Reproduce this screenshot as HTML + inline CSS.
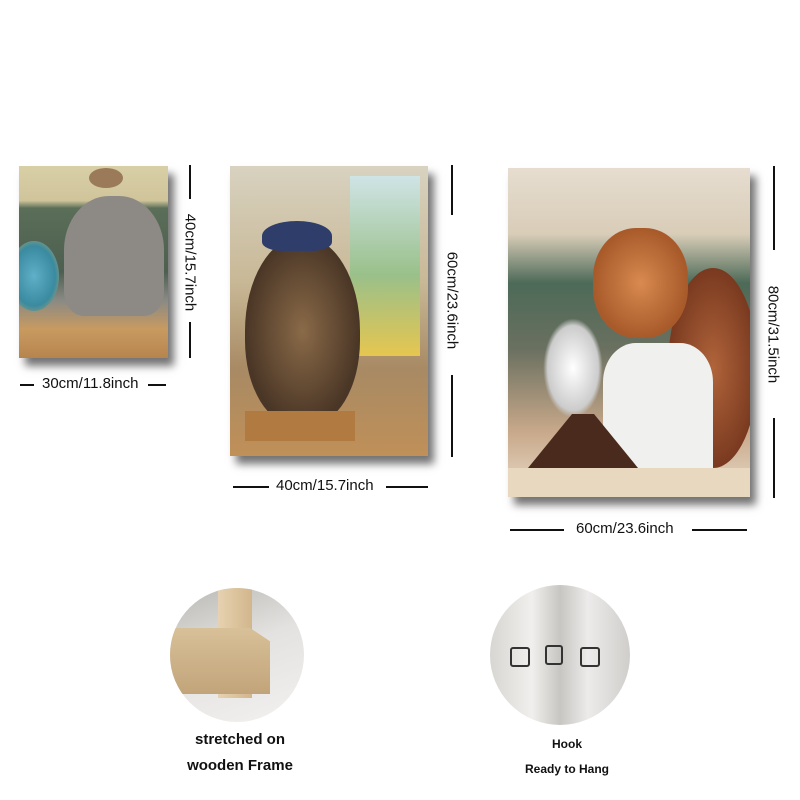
<!DOCTYPE html>
<html><head><style>
body{margin:0;width:800px;height:800px;background:#fff;position:relative;overflow:hidden;font-family:"Liberation Sans",sans-serif;}
.a{position:absolute}
.p{position:absolute;box-shadow:6px 8px 8px rgba(0,0,0,.55)}
.t{position:absolute;font-size:15px;color:#111;white-space:nowrap}
.hl{position:absolute;height:2px;background:#111}
.vl{position:absolute;width:2px;background:#111}
.r{position:absolute;font-size:15px;color:#111;white-space:nowrap;transform:rotate(90deg);transform-origin:center}
.c{position:absolute;border-radius:50%;overflow:hidden}
.b{position:absolute;font-weight:bold;color:#111;text-align:center;white-space:nowrap}
</style></head><body>

<div class="p" style="left:19px;top:166px;width:149px;height:192px;background:linear-gradient(180deg,#d9cfa6 0%,#cfc49a 18%,#5a6e58 22%,#4d5f50 55%,#8a8a84 70%,#c89a60 85%,#b6854e 100%);overflow:hidden">
 <div class="a" style="left:45px;top:30px;width:100px;height:120px;background:#8d8a86;border-radius:45% 45% 20% 20%"></div>
 <div class="a" style="left:-10px;top:75px;width:50px;height:70px;background:radial-gradient(#5fb0c8,#3a8aa0 60%,#d0b060);border-radius:50%"></div>
 <div class="a" style="left:70px;top:2px;width:34px;height:20px;border-radius:50%;background:#9a7a58"></div>
</div>
<div class="vl" style="left:189px;top:165px;height:34px"></div>
<div class="vl" style="left:189px;top:322px;height:36px"></div>
<div class="r" style="left:140px;top:254px;width:100px;text-align:center">40cm/15.7inch</div>
<div class="hl" style="left:20px;top:384px;width:14px"></div>
<div class="t" style="left:42px;top:375px">30cm/11.8inch</div>
<div class="hl" style="left:148px;top:384px;width:18px"></div>

<div class="p" style="left:230px;top:166px;width:198px;height:290px;background:linear-gradient(180deg,#d8d2c0 0%,#c8b896 40%,#a88a64 70%,#c09058 100%);overflow:hidden">
 <div class="a" style="left:120px;top:10px;width:70px;height:180px;background:linear-gradient(180deg,#cfe4e6,#9ac08a 55%,#e6c650)"></div>
 <div class="a" style="left:15px;top:70px;width:115px;height:190px;background:radial-gradient(#8a6a48,#4a3626 70%);border-radius:50% 50% 45% 45%"></div>
 <div class="a" style="left:32px;top:55px;width:70px;height:30px;background:#2f3d6a;border-radius:50% 50% 30% 30%"></div>
 <div class="a" style="left:15px;top:245px;width:110px;height:30px;background:#b07a40"></div>
</div>
<div class="vl" style="left:451px;top:165px;height:50px"></div>
<div class="vl" style="left:451px;top:375px;height:82px"></div>
<div class="r" style="left:402px;top:292px;width:100px;text-align:center">60cm/23.6inch</div>
<div class="hl" style="left:233px;top:486px;width:36px"></div>
<div class="t" style="left:276px;top:477px">40cm/15.7inch</div>
<div class="hl" style="left:386px;top:486px;width:42px"></div>

<div class="p" style="left:508px;top:168px;width:242px;height:329px;background:linear-gradient(180deg,#e6ddd0 0%,#d9cdb8 20%,#4d6a58 35%,#6a7060 55%,#c8a88a 80%,#e8dcc8 100%);overflow:hidden">
 <div class="a" style="left:160px;top:100px;width:90px;height:200px;background:radial-gradient(#b0643a,#7a3a20 70%);border-radius:50%"></div>
 <div class="a" style="left:85px;top:60px;width:95px;height:110px;background:radial-gradient(#d88a50,#a85a2a 70%);border-radius:45%"></div>
 <div class="a" style="left:95px;top:175px;width:110px;height:130px;background:#f0f0ee;border-radius:30% 30% 0 0"></div>
 <div class="a" style="left:35px;top:150px;width:60px;height:100px;background:radial-gradient(#ffffff,#ccc 60%,transparent 70%)"></div>
 <div class="a" style="left:20px;top:240px;width:110px;height:60px;background:#4a2a1c;clip-path:polygon(0 100%,40% 10%,60% 10%,100% 100%)"></div>
 <div class="a" style="left:0;top:300px;width:242px;height:29px;background:#e8d8c0"></div>
</div>
<div class="vl" style="left:773px;top:166px;height:84px"></div>
<div class="vl" style="left:773px;top:418px;height:80px"></div>
<div class="r" style="left:723px;top:326px;width:100px;text-align:center">80cm/31.5inch</div>
<div class="hl" style="left:510px;top:529px;width:54px"></div>
<div class="t" style="left:576px;top:520px">60cm/23.6inch</div>
<div class="hl" style="left:692px;top:529px;width:55px"></div>

<div class="c" style="left:170px;top:588px;width:134px;height:134px;background:linear-gradient(160deg,#b8b8b4 0%,#e4e2e0 45%,#f2f1ef 100%)">
 <div class="a" style="left:48px;top:0;width:34px;height:110px;background:linear-gradient(90deg,#e6d2b0,#d2b68c)"></div>
 <div class="a" style="left:0;top:40px;width:100px;height:66px;background:linear-gradient(180deg,#d8c098,#c2a47a);clip-path:polygon(0 0,80% 0,100% 20%,100% 100%,0 100%)"></div>
</div>
<div class="c" style="left:490px;top:585px;width:140px;height:140px;background:linear-gradient(90deg,#d8d6d2,#f0efed 30%,#c8c6c2 50%,#ecebea 70%,#d0cecb)">
 <div class="a" style="left:20px;top:62px;width:16px;height:16px;border:2px solid #333;border-radius:3px"></div>
 <div class="a" style="left:55px;top:60px;width:14px;height:16px;border:2px solid #333;border-radius:3px"></div>
 <div class="a" style="left:90px;top:62px;width:16px;height:16px;border:2px solid #333;border-radius:3px"></div>
</div>
<div class="b" style="left:140px;top:731px;width:200px;font-size:15px">stretched on</div>
<div class="b" style="left:140px;top:757px;width:200px;font-size:15px">wooden Frame</div>
<div class="b" style="left:467px;top:737px;width:200px;font-size:12px">Hook</div>
<div class="b" style="left:467px;top:762px;width:200px;font-size:12px">Ready to Hang</div>
</body></html>
